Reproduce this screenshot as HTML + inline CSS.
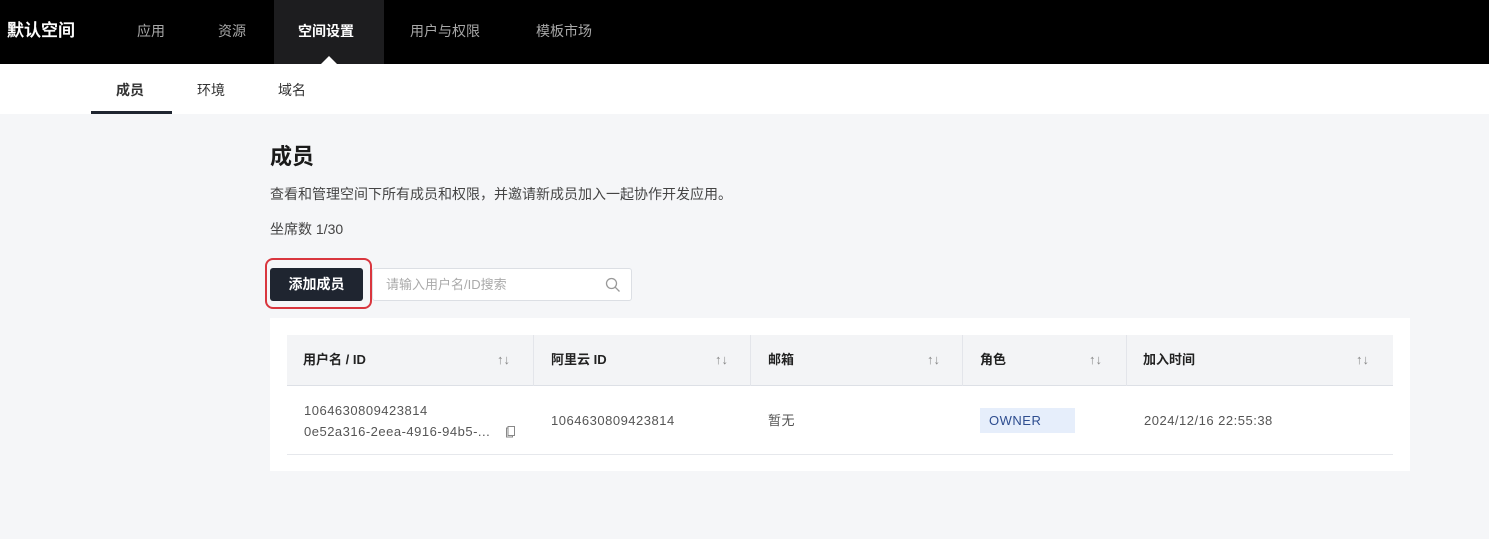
<!DOCTYPE html>
<html><head><meta charset="utf-8"><style>
*{margin:0;padding:0;box-sizing:border-box}
body{width:1489px;height:539px;overflow:hidden;background:#f5f6f8;font-family:"Liberation Sans","Noto Sans CJK SC",sans-serif;color:#333;position:relative;line-height:1}
.top{position:absolute;left:0;top:0;width:1489px;height:64px;background:#000}
.top span{position:absolute;top:24px;font-size:14px;color:#a8a8a8}
.logo{left:7px;font-size:17px!important;color:#fff!important;top:22px!important;font-weight:500;-webkit-text-stroke:0.3px #fff}
.act{position:absolute;left:274px;top:0;width:110px;height:64px;background:#1d1d1f}
.tri{position:absolute;left:321px;top:56px;width:0;height:0;border-left:8px solid transparent;border-right:8px solid transparent;border-bottom:8px solid #fff}
.sub{position:absolute;left:0;top:64px;width:1489px;height:50px;background:#fff}
.sub span{position:absolute;top:19px;font-size:14px;color:#333}
.ul{position:absolute;left:91px;top:111px;width:81px;height:3px;background:#1f2530}
.abs{position:absolute}
.card{position:absolute;left:270px;top:318px;width:1140px;height:153px;background:#fff}
.th{position:absolute;top:335px;height:51px;background:#f3f4f6;border-bottom:1px solid #dde0e6}
.th b{position:absolute;top:18px;font-size:13px;color:#222;font-weight:bold}
.th i{position:absolute;top:18px;font-style:normal;font-size:13px;color:#888}
.sep{position:absolute;top:335px;width:1px;height:51px;background:#e3e5ea}
.cell{position:absolute;font-size:13px;color:#555;letter-spacing:.5px}
</style></head><body>
<div class="top">
<div class="act"></div>
<span class="logo">默认空间</span>
<span style="left:137px">应用</span>
<span style="left:218px">资源</span>
<span style="left:298px;color:#fff;font-weight:bold">空间设置</span>
<span style="left:410px">用户与权限</span>
<span style="left:536px">模板市场</span>
</div>
<div class="sub">
<span style="left:116px;font-weight:bold">成员</span>
<span style="left:197px">环境</span>
<span style="left:278px">域名</span>
</div>
<div class="tri"></div>
<div class="ul"></div>
<div class="abs" style="left:270px;top:146px;font-size:22px;font-weight:bold;color:#1a1a1a">成员</div>
<div class="abs" style="left:270px;top:187px;font-size:14px;color:#444">查看和管理空间下所有成员和权限，并邀请新成员加入一起协作开发应用。</div>
<div class="abs" style="left:270px;top:222px;font-size:14px;color:#444">坐席数 1/30</div>
<div class="abs" style="left:265px;top:258px;width:107px;height:51px;border:2px solid #d9363e;border-radius:8px"></div>
<div class="abs" style="left:270px;top:268px;width:93px;height:33px;background:#1f2530;border-radius:3px;color:#fff;font-size:14px;font-weight:bold;text-align:center;line-height:33px">添加成员</div>
<div class="abs" style="left:372px;top:268px;width:260px;height:33px;background:#fff;border:1px solid #dcdfe4;border-radius:3px">
<span class="abs" style="left:13px;top:9px;font-size:13px;color:#aaa">请输入用户名/ID搜索</span>
<svg class="abs" style="left:232px;top:8px" width="16" height="16" viewBox="0 0 16 16"><circle cx="6.5" cy="6.5" r="5" fill="none" stroke="#999" stroke-width="1.3"/><line x1="10.2" y1="10.2" x2="14.5" y2="14.5" stroke="#999" stroke-width="1.3"/></svg>
</div>
<div class="card"></div>
<div class="th" style="left:287px;width:1106px">
<b style="left:16px">用户名 / ID</b><i style="left:210px">↑↓</i>
<b style="left:264px">阿里云 ID</b><i style="left:428px">↑↓</i>
<b style="left:481px">邮箱</b><i style="left:640px">↑↓</i>
<b style="left:693px">角色</b><i style="left:802px">↑↓</i>
<b style="left:856px">加入时间</b><i style="left:1069px">↑↓</i>
</div>
<div class="sep" style="left:533px"></div>
<div class="sep" style="left:750px"></div>
<div class="sep" style="left:962px"></div>
<div class="sep" style="left:1126px"></div>
<div class="cell" style="left:304px;top:404px">1064630809423814</div>
<div class="cell" style="left:304px;top:425px">0e52a316-2eea-4916-94b5-...</div>
<svg class="abs" style="left:505px;top:425px" width="11" height="13" viewBox="0 0 11 13"><path d="M3 1.5H9.5V10.5H3Z M3 3H1.5V12H7.5V10.5" fill="none" stroke="#888" stroke-width="1"/></svg>
<div class="cell" style="left:551px;top:414px">1064630809423814</div>
<div class="cell" style="left:768px;top:414px">暂无</div>
<div class="abs" style="left:980px;top:408px;width:95px;height:25px;background:#e6eefb;color:#2e4d8f;font-size:13px;line-height:25px;padding-left:9px;letter-spacing:.5px">OWNER</div>
<div class="cell" style="left:1144px;top:414px">2024/12/16 22:55:38</div>
<div class="abs" style="left:287px;top:454px;width:1106px;height:1px;background:#e6e8ec"></div>
</body></html>
